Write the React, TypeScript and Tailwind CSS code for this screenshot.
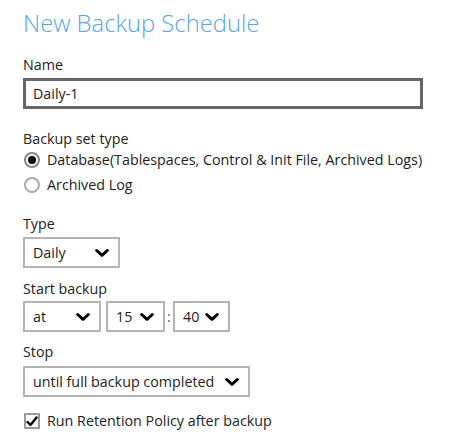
import React from "react";

const Chevron = () => (
  <svg width="14" height="10" viewBox="0 0 14 10" className="shrink-0">
    <path d="M1.7 2.5 L7 7.3 L12.3 2.5" fill="none" stroke="#000" strokeWidth="3" strokeLinecap="round" strokeLinejoin="round" />
  </svg>
);

const Select = ({ value, w }: { value: string; w: string }) => (
  <div className={`flex items-center justify-between h-[31px] border-2 border-[#b4b4b4] bg-white pl-[8px] pr-[9px] whitespace-nowrap ${w}`}>
    <span className="text-[14.3px] text-[#222]">{value}</span>
    <Chevron />
  </div>
);

export default function App() {
  return (
    <div className="w-[449px] h-[446px] bg-white pl-[23px] pt-[7px] text-[#222]" style={{ fontFamily: '"Open Sans", sans-serif' }}>
      <h1 className="text-[23.8px] font-light text-[#5aa3ec] leading-[33px]">New Backup Schedule</h1>
      <div className="mt-[15px] text-[14.3px] leading-[19px]">Name</div>
      <div className="mt-[4px] w-[400px] h-[31px] border-[3px] border-[#666] flex items-center pl-[7px] text-[14.3px]">Daily-1</div>

      <div className="mt-[20px] text-[14.3px] leading-[19px]">Backup set type</div>
      <div className="mt-[1px] flex items-center gap-[7px] h-[22px]">
        <div className="w-[16px] h-[16px] rounded-full border-2 border-[#888] flex items-center justify-center ml-[1px]">
          <div className="w-[8px] h-[8px] rounded-full bg-black" />
        </div>
        <span className="text-[14.3px]">Database(Tablespaces, Control &amp; Init File, Archived Logs)</span>
      </div>
      <div className="mt-[3px] flex items-center gap-[7px] h-[22px]">
        <div className="w-[16px] h-[16px] rounded-full border-2 border-[#aaa] ml-[1px]" />
        <span className="text-[14.3px]">Archived Log</span>
      </div>

      <div className="mt-[18px] text-[14.3px] leading-[19px]">Type</div>
      <div className="mt-[4px]">
        <Select value="Daily" w="w-[97px]" />
      </div>

      <div className="mt-[11px] text-[14.3px] leading-[19px]">Start backup</div>
      <div className="mt-[3px] flex items-center">
        <Select value="at" w="w-[78px]" />
        <div className="ml-[5px]"><Select value="15" w="w-[59px]" /></div>
        <span className="w-[8px] text-center text-[14.3px] text-[#555]">:</span>
        <Select value="40" w="w-[57px]" />
      </div>

      <div className="mt-[10px] text-[14.3px] leading-[19px]">Stop</div>
      <div className="mt-[5px]">
        <Select value="until full backup completed" w="w-[227px]" />
      </div>

      <div className="mt-[13px] flex items-center gap-[7px] h-[22px]">
        <div className="w-[16px] h-[16px] border-2 border-[#999] flex items-center justify-center ml-[1px]">
          <svg width="12" height="11" viewBox="0 0 12 11">
            <path d="M1.5 6 L4.5 9 L10.5 1.5" fill="none" stroke="#000" strokeWidth="2.4" strokeLinecap="round" strokeLinejoin="round" />
          </svg>
        </div>
        <span className="text-[14.3px]">Run Retention Policy after backup</span>
      </div>
    </div>
  );
}
